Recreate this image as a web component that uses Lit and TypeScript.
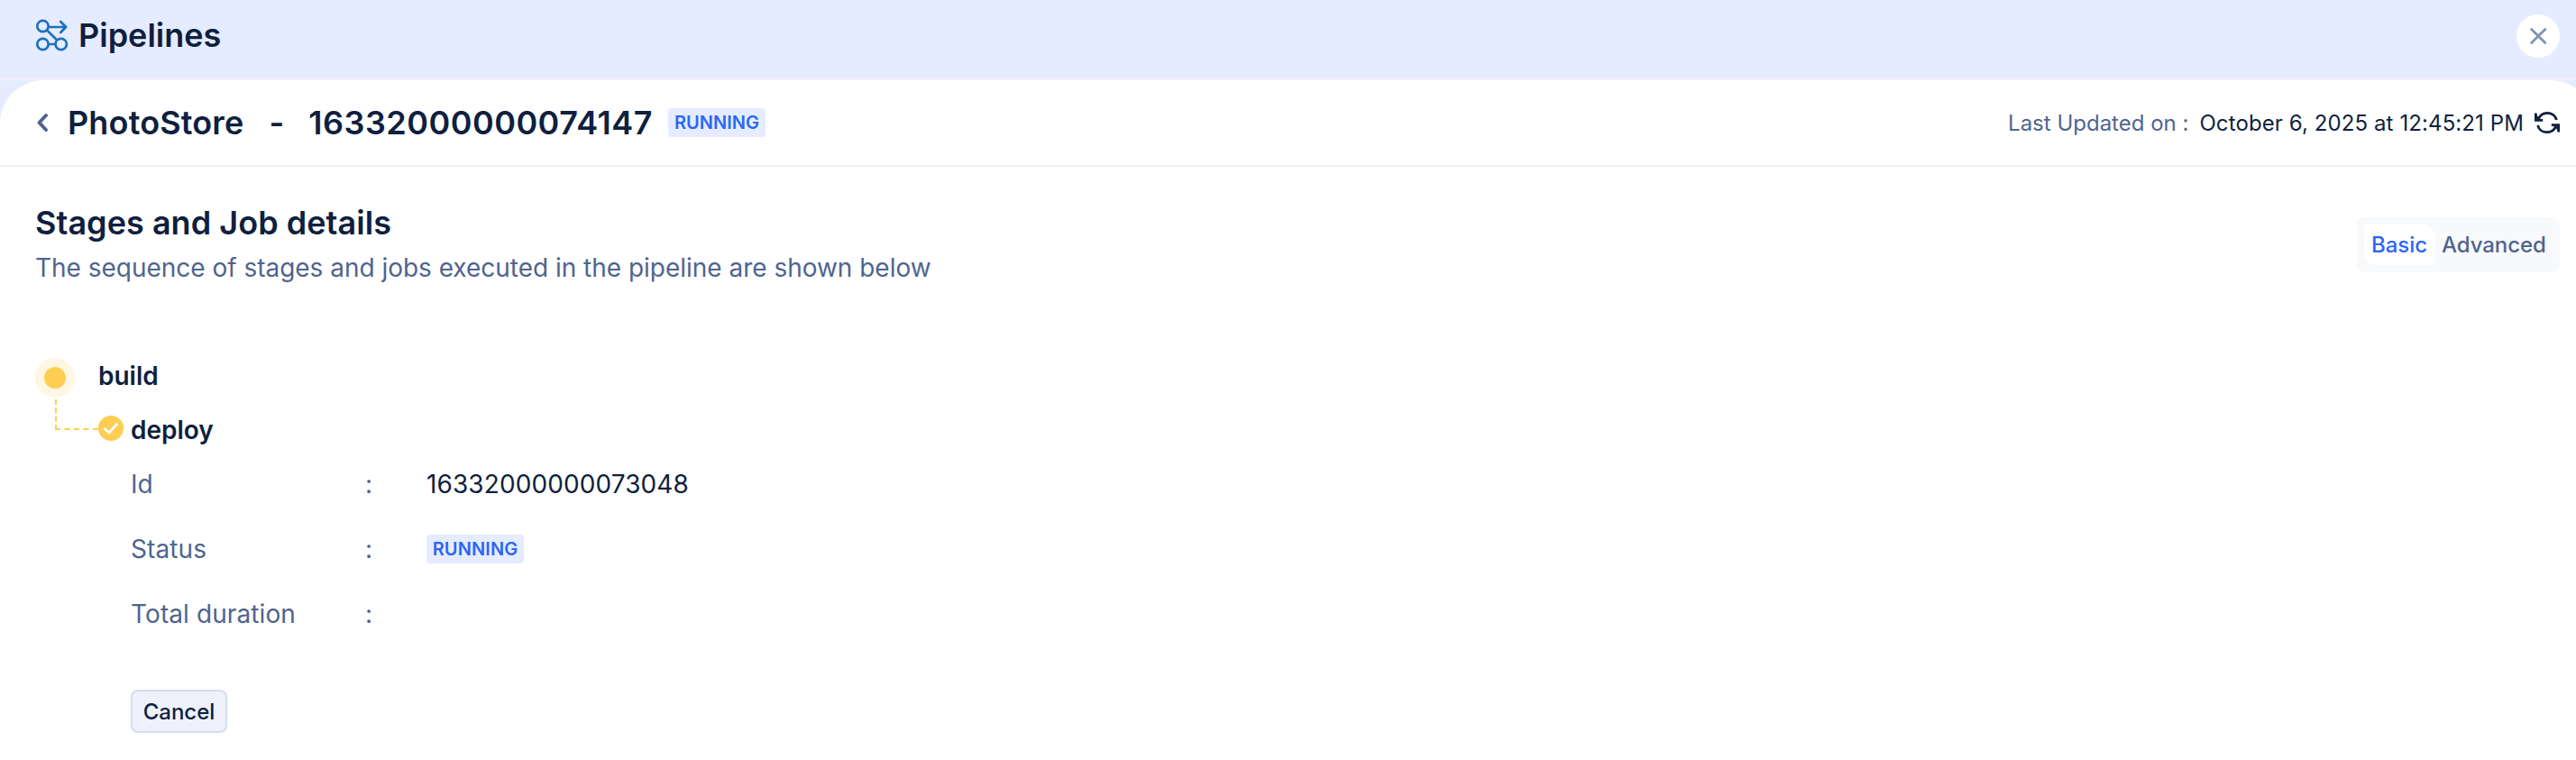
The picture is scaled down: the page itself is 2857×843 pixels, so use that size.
import { LitElement, html, css } from 'lit';
import { customElement, property } from 'lit/decorators.js';

@customElement('status-badge')
export class StatusBadge extends LitElement {
  @property() label: string = '';
  static styles = css`
    :host {
      display: inline-flex;
      align-items: center;
      justify-content: center;
      box-sizing: border-box;
      width: 108px;
      height: 32px;
      border-radius: 4px;
      background: #e5ecff;
      color: #2c66f5;
      font-size: 20px;
      font-weight: 600;
      line-height: 32px;
    }
  `;
  render() {
    return html`${this.label}`;
  }
}

@customElement('app-root')
export class AppRoot extends LitElement {
  @property() pipeline: string = 'PhotoStore';
  @property() runId: string = '16332000000074147';
  @property() lastUpdated: string = 'October 6, 2025 at 12:45:21 PM';
  @property({ type: Array }) details: any[] = [
    { label: 'Id', value: '16332000000073048' },
    { label: 'Status', value: html`<status-badge label="RUNNING"></status-badge>` },
    { label: 'Total duration', value: '' },
  ];

  static styles = [
    css`
    :host {
      display: block;
      height: 843px;
      overflow: hidden;
      background: #e5ecff;
      font-family: Inter, "Liberation Sans", sans-serif;
      font-size: 28px;
      color: #0f1f40;
      white-space: nowrap;
    }
    svg {
      display: block;
      flex: none;
    }
    button {
      font: inherit;
      color: inherit;
      margin: 0;
      padding: 0;
      border: none;
      background: none;
    }
    h1, h2, h3, h4, p, dl, dd, dt {
      margin: 0;
      font-size: inherit;
      font-weight: inherit;
    }
    .topbar {
      display: flex;
      align-items: center;
      box-sizing: border-box;
      height: 89px;
      padding: 0 18px 10px 39px;
      border-bottom: 2px solid #f0effb;
    }
    .topbar h1 {
      flex: 1;
      margin-left: 10px;
      font-size: 36px;
      font-weight: 600;
    }
    .close {
      display: flex;
      align-items: center;
      justify-content: center;
      width: 48px;
      height: 48px;
      margin-top: 3px;
      border-radius: 50%;
      background: #fff;
    }
    .panel {
      box-sizing: border-box;
      width: calc(100% + 20px);
      height: 754px;
      border-radius: 48px 48px 0 0;
      background: #fff;
    }
    .heading {
      display: flex;
      align-items: center;
      box-sizing: border-box;
      height: 96px;
      padding: 0 38px 0 40px;
      border-bottom: 2px solid #edf2fc;
    }
    .title {
      display: flex;
      margin: 0 17px 0 19px;
      font-size: 36px;
      font-weight: 600;
      letter-spacing: 0.15px;
    }
    .dash {
      margin: 0 27px 0 28px;
    }
    .run {
      letter-spacing: 0.48px;
    }
    .updated {
      display: flex;
      align-items: center;
      margin-left: auto;
      font-size: 24px;
    }
    .muted {
      color: #50648f;
    }
    .updated .muted {
      margin-right: 12px;
    }
    .date {
      letter-spacing: 0.1px;
    }
    .refresh {
      margin-left: 12px;
    }
    .intro {
      display: flex;
      justify-content: space-between;
      padding: 38px 38px 0 39px;
    }
    .intro h2 {
      font-size: 36px;
      font-weight: 600;
      line-height: 48px;
      letter-spacing: 0.04px;
    }
    .intro p {
      margin-top: 8px;
      line-height: 36px;
      letter-spacing: -0.02px;
    }
    .toggle {
      display: flex;
      align-items: center;
      box-sizing: border-box;
      width: 225px;
      height: 61px;
      margin-top: 18px;
      padding: 8px;
      border-radius: 8px;
      background: #f7f9fb;
      font-size: 24px;
      font-weight: 500;
    }
    .toggle button {
      height: 45px;
      padding: 0 8px;
      color: #50648f;
      letter-spacing: -0.05px;
    }
    .toggle .active {
      border-radius: 4px 12px 4px 12px;
      background: #fff;
      color: #2c66f5;
    }
    .stages {
      display: grid;
      grid-template-columns: 70px 36px 1fr;
      padding: 82px 0 0 39px;
    }
    .rail {
      grid-row: 1 / 3;
    }
    .dot {
      box-sizing: border-box;
      width: 44px;
      height: 44px;
      border: 10px solid #fff7e3;
      border-radius: 50%;
      background: #ffcd52;
    }
    .connector {
      box-sizing: border-box;
      width: 48px;
      height: 34px;
      margin: 2px 0 0 22px;
      border-left: 2px dashed #ffcd52;
      border-bottom: 2px dashed #ffcd52;
    }
    .stage {
      grid-column: 2 / 4;
      height: 60px;
      font-weight: 600;
      line-height: 40px;
    }
    .check {
      margin-top: 4px;
    }
    .job h4 {
      height: 40px;
      font-weight: 600;
      line-height: 40px;
    }
    .details {
      display: grid;
      grid-template-columns: 260px 68px auto;
      grid-auto-rows: 40px;
      row-gap: 32px;
      align-items: center;
      margin-top: 20px;
      letter-spacing: 0.1px;
    }
    .details dd {
      display: flex;
    }
    .cancel {
      box-sizing: border-box;
      width: 107px;
      height: 48px;
      margin-top: 64px;
      border: 2px solid #d5ddf0;
      border-radius: 8px;
      background: #eef1fb;
      font-size: 24px;
      font-weight: 500;
      letter-spacing: -0.05px;
    }
    `
  ];

  render() {
    return html`
<header class="topbar">
  ${this.pipelineIcon()}
  <h1>Pipelines</h1>
  <button class="close" aria-label="Close">
    <svg width="20" height="20" viewBox="0 0 20 20" fill="none" stroke="#8292b3" stroke-width="2.8" stroke-linecap="round">
      <path d="M2.6 2.6 17.8 17.6M17.8 2.6 2.6 17.6" />
    </svg>
  </button>
</header>
<main class="panel">
  <div class="heading">
    <svg width="16" height="22" viewBox="0 0 16 22" fill="none" stroke="#50648f" stroke-width="4" stroke-linecap="round" stroke-linejoin="round">
      <path d="M11 3 3.5 11l7.5 8" />
    </svg>
    <h2 class="title">
      <span>${this.pipeline}</span><span class="dash">-</span><span class="run">${this.runId}</span>
    </h2>
    <status-badge label="RUNNING"></status-badge>
    <div class="updated">
      <span class="muted">Last Updated on :</span>
      <span class="date">${this.lastUpdated}</span>
      ${this.refreshIcon()}
    </div>
  </div>
  <section class="intro">
    <div>
      <h2>Stages and Job details</h2>
      <p class="muted">The sequence of stages and jobs executed in the pipeline are shown below</p>
    </div>
    <div class="toggle">
      <button class="active">Basic</button>
      <button>Advanced</button>
    </div>
  </section>
  <section class="stages">
    <div class="rail">
      <div class="dot"></div>
      <div class="connector"></div>
    </div>
    <h3 class="stage">build</h3>
    <svg class="check" width="28" height="28" viewBox="0 0 28 28" fill="none">
      <circle cx="14" cy="14" r="14" fill="#ffcd52" />
      <path d="M7.5 15l4.3 4 8.7-9.5" stroke="#fff" stroke-width="2.8" stroke-linecap="round" stroke-linejoin="round" />
    </svg>
    <div class="job">
      <h4>deploy</h4>
      <dl class="details">
        ${this.details.map((row) => html`
        <dt class="muted">${row.label}</dt>
        <dd class="muted">:</dd>
        <dd>${row.value}</dd>`)}
      </dl>
      <button class="cancel">Cancel</button>
    </div>
  </section>
</main>`;
  }

  pipelineIcon() {
    return html`
<svg width="38" height="38" viewBox="0 0 38 38" fill="none" stroke="#1f6fbd" stroke-width="2.7" stroke-linecap="round" stroke-linejoin="round">
  <circle cx="8.5" cy="9" r="6.2" />
  <circle cx="8.5" cy="29" r="6.2" />
  <circle cx="28.7" cy="29" r="6.2" />
  <path d="M15 10h19M28.2 4l6 6-6 6M13.2 13.6l10.8 10.6M15 29h7.2" />
</svg>`;
  }

  refreshIcon = () => {
    return html`
<svg class="refresh" width="28" height="26" viewBox="0 0 28 26" fill="none" stroke="#0f1f40" stroke-width="2.8">
  <path d="M4.2 9.2C6 4.6 9.6 2.3 14 2.3c5 0 9.3 3 10.4 7.7" />
  <path d="M23.8 16.8C22 21.4 18.4 23.7 14 23.7c-5 0-9.3-3-10.4-7.7" />
  <path d="M1.4 2.5v7.9h7.8M26.6 23.5v-7.9h-7.8" />
  <path d="M1 3.5V11h7.5zM27 22.5V15h-7.5z" fill="#0f1f40" stroke="none" />
</svg>`;
  }
}

declare global {
  interface HTMLElementTagNameMap {
    'app-root': AppRoot,
    'status-badge': StatusBadge
  }
}
